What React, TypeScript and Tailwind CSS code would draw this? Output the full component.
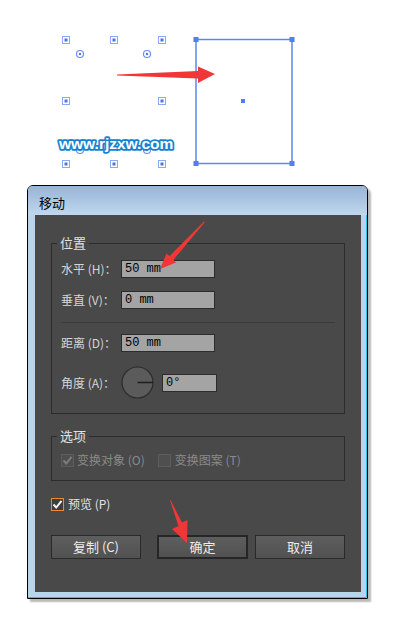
import React from 'react';

const cjk = "font-['Noto_Sans_CJK_SC','Noto_Sans',sans-serif]";

function Handle({ x, y }: { x: number; y: number }) {
    return (
        <g>
            <rect x={x - 3.5} y={y - 3.5} width={7} height={7} fill="#fff" stroke="#8ea8f2" strokeWidth={1} />
            <rect x={x - 1.5} y={y - 1.5} width={3} height={3} fill="#4a74ea" />
        </g>
    );
}

function Pivot({ x, y }: { x: number; y: number }) {
    return (
        <g>
            <circle cx={x} cy={y} r={3.5} fill="#fff" stroke="#6b8ff0" strokeWidth={1.2} />
            <circle cx={x} cy={y} r={1.2} fill="#4a74ea" />
        </g>
    );
}

function Canvas() {
    return (
        <svg width={394} height={185} viewBox="0 0 394 185" className="block">
            {[
                [66, 40],
                [114, 40],
                [162, 40],
                [66, 101],
                [162, 101],
                [66, 164],
                [114, 164],
                [162, 164],
            ].map(([x, y]) => (
                <Handle key={`${x}-${y}`} x={x} y={y} />
            ))}
            <Pivot x={80} y={54} />
            <Pivot x={147} y={54} />
            <Pivot x={80} y={150} />
            <Pivot x={147} y={150} />
            <text
                x={59}
                y={149}
                fontFamily="'Liberation Sans', Arial, sans-serif"
                fontWeight={700}
                fontSize={15.5}
                fill="#ffffff"
                stroke="#1683d2"
                strokeWidth={3.6}
                strokeLinejoin="round"
                paintOrder="stroke"
            >
                www.rjzxw.com
            </text>
            <rect x={196} y={39.5} width={96} height={124} fill="none" stroke="#5b86f0" strokeWidth={1.5} />
            {[
                [196, 39.5],
                [292, 39.5],
                [196, 163.5],
                [292, 163.5],
            ].map(([x, y]) => (
                <rect key={`c-${x}-${y}`} x={x - 2.5} y={y - 2.5} width={5} height={5} fill="#4f7ff0" />
            ))}
            <rect x={241} y={99} width={4} height={4} fill="#4f7ff0" />
        </svg>
    );
}

function Arrows() {
    return (
        <svg width={394} height={626} viewBox="0 0 394 626" className="pointer-events-none absolute left-0 top-0">
            {/* top arrow */}
            <polygon points="117,74.6 198,71 198,66.5 215,74 198,83 198,78.5 117,75.6" fill="#f03636" />
            {/* arrow on input */}
            <polygon points="205,222 173.5,259.8 176,262.5 160,269 166.5,253.5 169.5,256 204,221.5" fill="#f03636" />
            {/* arrow on ok button */}
            <polygon points="170.5,500 182,522.5 187.5,520 187,543 172,529 178.5,526 170,500.5" fill="#f03636" />
        </svg>
    );
}

function Field({ label, value }: { label: string; value: string }) {
    return (
        <div className="flex h-[18px] items-center">
            <span className="w-[60px] text-[12px] leading-[18px] text-[#d6d6d6]">{label}</span>
            <div className="flex h-[18px] w-[94px] items-center border border-[#2c2c2c] bg-[#a4a4a4] pl-[3px] font-['Liberation_Mono',monospace] text-[12px] text-black">
                {value}
            </div>
        </div>
    );
}

function Check({ checked, disabled, focus }: { checked: boolean; disabled?: boolean; focus?: boolean }) {
    return (
        <span
            className={`flex h-[13px] w-[13px] items-center justify-center border ${
                focus ? 'border-[#ec8a2c] bg-[#3e3e3e]' : 'border-[#5c5c5c] bg-[#4f4f4f]'
            }`}
        >
            {checked && (
                <svg width={11} height={11} viewBox="0 0 11 11">
                    <path d="M1.5 5.5 L4.2 8.5 L9.5 1.8" fill="none" stroke={disabled ? '#7c7c7c' : '#f2f2f2'} strokeWidth={2} />
                </svg>
            )}
        </span>
    );
}

function Button({ children, primary }: { children: React.ReactNode; primary?: boolean }) {
    return (
        <button
            type="button"
            className={`flex h-[24px] items-center justify-center bg-gradient-to-b from-[#5e5e5e] to-[#515151] text-[13px] text-[#ececec] ${
                primary ? 'w-[91px] border-2 border-[#262626]' : 'w-[90px] border border-[#2a2a2a]'
            }`}
        >
            {children}
        </button>
    );
}

function MoveDialog() {
    return (
        <div className={`ml-[27px] w-[341px] rounded-t-[6px] border border-black shadow-[3px_3px_2px_rgba(0,0,0,0.28)] ${cjk}`}>
            <div className="flex h-[29px] items-end rounded-t-[5px] bg-gradient-to-b from-[#97b5d7] to-[#c0d7ee] pb-[3px] pl-[11px] text-[13px] text-black">
                移动
            </div>
            <div className="border-b border-r border-[#27c2e6] bg-[#bbd4ed] pb-[5px] pl-[7px] pr-[5px]">
                <div className="h-[377px] w-[326px] bg-[#494949] px-[16px] pt-[20px]">
                    <fieldset className="h-[179px] border border-[#2c2c2c] px-[9px]">
                        <legend className="-ml-[4px] px-[3px] text-[13px] leading-[16px] text-[#e2e2e2]">位置</legend>
                        <div className="mt-[9px] flex flex-col gap-[13px]">
                            <Field label="水平 (H)：" value="50 mm" />
                            <Field label="垂直 (V)：" value="0 mm" />
                        </div>
                        <div className="mt-[13px] h-px bg-[#3a3a3a]" />
                        <div className="mt-[11px]">
                            <Field label="距离 (D)：" value="50 mm" />
                        </div>
                        <div className="mt-[14px] flex items-center">
                            <span className="w-[60px] text-[12px] text-[#d6d6d6]">角度 (A)：</span>
                            <svg width={33} height={33} viewBox="0 0 33 33">
                                <circle cx={16.5} cy={16.5} r={15.5} fill="#5b5b5b" stroke="#2c2c2c" strokeWidth={1.2} />
                                <line x1={16.5} y1={16.5} x2={32} y2={16.5} stroke="#1e1e1e" strokeWidth={1.5} />
                            </svg>
                            <div className="ml-[8px] flex h-[18px] w-[55px] items-center border border-[#2c2c2c] bg-[#a4a4a4] pl-[3px] font-['Liberation_Mono',monospace] text-[12px] text-black">
                                0°
                            </div>
                        </div>
                    </fieldset>
                    <fieldset className="mt-[14px] h-[53px] border border-[#2c2c2c] px-[9px]">
                        <legend className="-ml-[4px] px-[3px] text-[13px] leading-[16px] text-[#e2e2e2]">选项</legend>
                        <div className="mt-[8px] flex h-[16px] items-center text-[12px] text-[#8a8a8a]">
                            <Check checked disabled />
                            <span className="ml-[3px]">变换对象 (O)</span>
                            <span className="ml-[13px]" />
                            <Check checked={false} />
                            <span className="ml-[4px]">变换图案 (T)</span>
                        </div>
                    </fieldset>
                    <div className="mt-[15px] flex h-[16px] items-center text-[12px] text-[#e2e2e2]">
                        <Check checked focus />
                        <span className="ml-[4px]">预览 (P)</span>
                    </div>
                    <div className="mt-[23px] flex">
                        <Button>复制 (C)</Button>
                        <span className="w-[16px]" />
                        <Button primary>确定</Button>
                        <span className="w-[7px]" />
                        <Button>取消</Button>
                    </div>
                </div>
            </div>
        </div>
    );
}

export default function App() {
    return (
        <div className="relative h-[626px] w-[394px] overflow-hidden bg-white">
            <Canvas />
            <MoveDialog />
            <Arrows />
        </div>
    );
}
